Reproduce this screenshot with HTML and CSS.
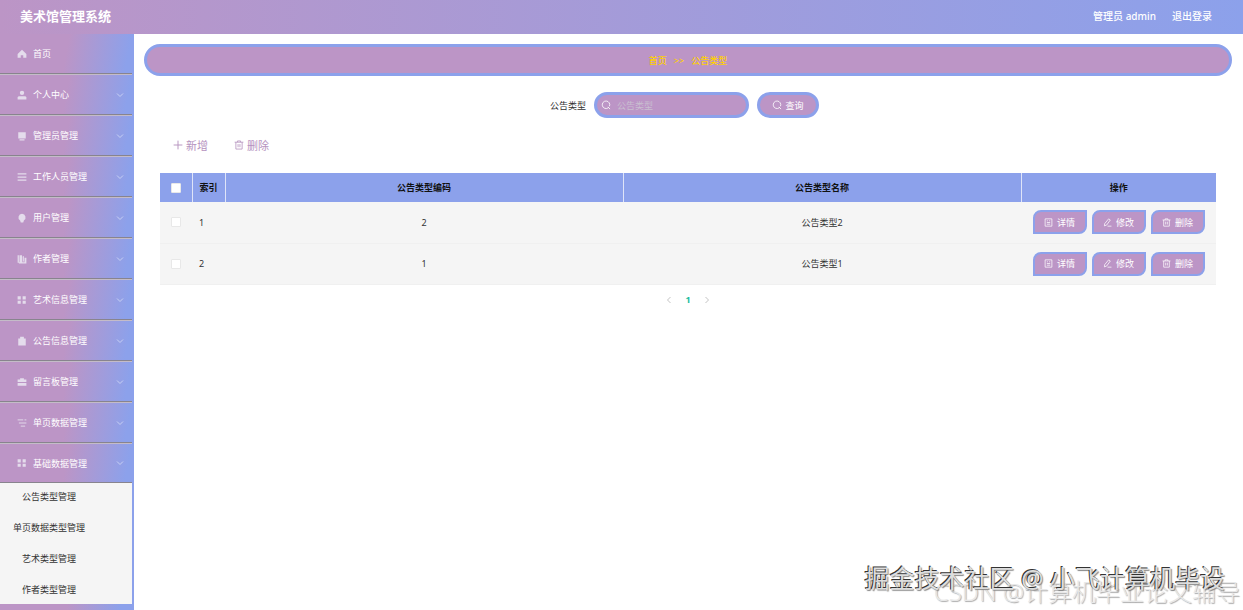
FILE: index.html
```
<!DOCTYPE html>
<html lang="zh-CN">
<head>
    <meta charset="UTF-8">
    <meta name="viewport" content="width=device-width, initial-scale=1.0">
    <title>美术馆管理系统</title>
    <link rel="stylesheet" href="styles.css">
</head>
<body>

<!-- shared icons -->
<svg class="sprite" aria-hidden="true">
    <symbol id="down" viewBox="0 0 16 16"><path d="M2 5l6 6 6-6" fill="none" stroke="currentColor" stroke-width="2"/></symbol>
    <symbol id="left" viewBox="0 0 16 16"><path d="M11 2L5 8l6 6" fill="none" stroke="currentColor" stroke-width="1.8"/></symbol>
    <symbol id="right" viewBox="0 0 16 16"><path d="M5 2l6 6-6 6" fill="none" stroke="currentColor" stroke-width="1.8"/></symbol>
    <symbol id="search" viewBox="0 0 16 16"><path d="M11.500 12.500a6 6 0 1 1 2-2.500M11 11l3.500 3.500" fill="none" stroke="currentColor" stroke-width="1.300"/></symbol>
    <symbol id="plus" viewBox="0 0 16 16"><path d="M8 1v14M1 8h14" fill="none" stroke="currentColor" stroke-width="1.500"/></symbol>
    <symbol id="trash" viewBox="0 0 16 16"><path d="M1 3.500h14M5.500 3.500v-2h5v2M3 3.500v11h10v-11M6.500 6.500v5M9.500 6.500v5" fill="none" stroke="currentColor" stroke-width="1.300"/></symbol>
    <symbol id="doc" viewBox="0 0 16 16"><path d="M2 1.500h12v13H2zM5 5h2M5 8h6M5 11h6M9 5h2" fill="none" stroke="currentColor" stroke-width="1.300"/></symbol>
    <symbol id="edit" viewBox="0 0 16 16"><path d="M10 1.500l3 2-6.500 9-4 1.500.5-4zM8 14.500h7" fill="none" stroke="currentColor" stroke-width="1.300"/></symbol>
    <symbol id="home" viewBox="0 0 16 16"><path d="M8 1L1 8v6h5v-4h4v4h5V8z" fill="currentColor"/></symbol>
    <symbol id="user" viewBox="0 0 16 16"><circle cx="8" cy="4.500" r="3.500" fill="currentColor"/><path d="M1 15v-3q0-2 3-2h8q3 0 3 2v3z" fill="currentColor"/></symbol>
    <symbol id="screen" viewBox="0 0 16 16"><path d="M2 2h12v10H2zM4 13h8v2H4z" fill="currentColor"/></symbol>
    <symbol id="list" viewBox="0 0 16 16"><path d="M1 3h14M1 8h14M1 13h14" stroke="currentColor" stroke-width="2"/></symbol>
    <symbol id="bulb" viewBox="0 0 16 16"><path d="M8 1a6 6 0 0 0-3 11l1 3h4l1-3A6 6 0 0 0 8 1z" fill="currentColor"/></symbol>
    <symbol id="chart" viewBox="0 0 16 16"><path d="M1 2h2v12H1zM4 2h4v12H4zM9 4l2-1v8l-2 3zM12 6h3v8h-3zM3 13h12v2H3z" fill="currentColor"/></symbol>
    <symbol id="grid" viewBox="0 0 16 16"><path d="M1 2h5v5H1zM9 2h5v5H9zM1 9h5v5H1zM9 9h5v5H9z" fill="currentColor"/></symbol>
    <symbol id="clip" viewBox="0 0 16 16"><path d="M2 4h3V1h6v3h3v11H2z" fill="currentColor"/></symbol>
    <symbol id="case" viewBox="0 0 16 16"><path d="M5 4V2h6v2h4v4H1V4zM1 9.500h14V14H1z" fill="currentColor"/></symbol>
    <symbol id="tree" viewBox="0 0 16 16"><path d="M1 3h9M3 8h12M6 13h7M12 3h3" stroke="currentColor" stroke-width="1.500"/></symbol>
</svg>

<header class="header">
    <h1>美术馆管理系统</h1>
    <div class="header-right">
        <span>管理员 admin</span>
        <a href="#">退出登录</a>
    </div>
</header>

<div class="container">
    <nav class="sidebar">
        <ul class="menu">
            <li><a href="#"><svg class="icon"><use href="#home"/></svg><span>首页</span></a></li>
            <li><a href="#"><svg class="icon"><use href="#user"/></svg><span>个人中心</span><svg class="arrow"><use href="#down"/></svg></a></li>
            <li><a href="#"><svg class="icon"><use href="#screen"/></svg><span>管理员管理</span><svg class="arrow"><use href="#down"/></svg></a></li>
            <li><a href="#"><svg class="icon"><use href="#list"/></svg><span>工作人员管理</span><svg class="arrow"><use href="#down"/></svg></a></li>
            <li><a href="#"><svg class="icon"><use href="#bulb"/></svg><span>用户管理</span><svg class="arrow"><use href="#down"/></svg></a></li>
            <li><a href="#"><svg class="icon"><use href="#chart"/></svg><span>作者管理</span><svg class="arrow"><use href="#down"/></svg></a></li>
            <li><a href="#"><svg class="icon"><use href="#grid"/></svg><span>艺术信息管理</span><svg class="arrow"><use href="#down"/></svg></a></li>
            <li><a href="#"><svg class="icon"><use href="#clip"/></svg><span>公告信息管理</span><svg class="arrow"><use href="#down"/></svg></a></li>
            <li><a href="#"><svg class="icon"><use href="#case"/></svg><span>留言板管理</span><svg class="arrow"><use href="#down"/></svg></a></li>
            <li><a href="#"><svg class="icon"><use href="#tree"/></svg><span>单页数据管理</span><svg class="arrow"><use href="#down"/></svg></a></li>
            <li><a href="#"><svg class="icon"><use href="#grid"/></svg><span>基础数据管理</span><svg class="arrow"><use href="#down"/></svg></a></li>
        </ul>
        <ul class="submenu">
            <li><a href="#">公告类型管理</a></li>
            <li><a href="#">单页数据类型管理</a></li>
            <li><a href="#">艺术类型管理</a></li>
            <li><a href="#">作者类型管理</a></li>
        </ul>
    </nav>

    <main class="main">
        <div class="breadcrumb">
            <a href="#">首页</a>
            <span>&gt;&gt;</span>
            <span>公告类型</span>
        </div>

        <form class="search">
            <label for="typeName">公告类型</label>
            <div class="search-box">
                <svg class="icon"><use href="#search"/></svg>
                <input type="text" id="typeName" placeholder="公告类型">
            </div>
            <button type="button" class="btn-search"><svg class="icon"><use href="#search"/></svg>查询</button>
        </form>

        <div class="toolbar">
            <button type="button"><svg class="icon"><use href="#plus"/></svg>新增</button>
            <button type="button"><svg class="icon"><use href="#trash"/></svg>删除</button>
        </div>

        <table class="table">
            <thead>
                <tr>
                    <th class="col-check"><input type="checkbox" aria-label="全选"></th>
                    <th class="col-index">索引</th>
                    <th>公告类型编码</th>
                    <th>公告类型名称</th>
                    <th class="col-action">操作</th>
                </tr>
            </thead>
            <tbody>
                <tr>
                    <td><input type="checkbox" aria-label="选择 1"></td>
                    <td class="index">1</td>
                    <td>2</td>
                    <td>公告类型2</td>
                    <td>
                        <div class="actions">
                            <button type="button"><svg class="icon"><use href="#doc"/></svg>详情</button>
                            <button type="button"><svg class="icon"><use href="#edit"/></svg>修改</button>
                            <button type="button"><svg class="icon"><use href="#trash"/></svg>删除</button>
                        </div>
                    </td>
                </tr>
                <tr>
                    <td><input type="checkbox" aria-label="选择 2"></td>
                    <td class="index">2</td>
                    <td>1</td>
                    <td>公告类型1</td>
                    <td>
                        <div class="actions">
                            <button type="button"><svg class="icon"><use href="#doc"/></svg>详情</button>
                            <button type="button"><svg class="icon"><use href="#edit"/></svg>修改</button>
                            <button type="button"><svg class="icon"><use href="#trash"/></svg>删除</button>
                        </div>
                    </td>
                </tr>
            </tbody>
        </table>

        <div class="pagination">
            <button type="button" aria-label="上一页"><svg class="arrow"><use href="#left"/></svg></button>
            <button type="button" class="active">1</button>
            <button type="button" aria-label="下一页"><svg class="arrow"><use href="#right"/></svg></button>
        </div>
    </main>
</div>

<div class="watermark watermark-csdn">CSDN @计算机毕业论文辅导</div>
<div class="watermark watermark-juejin">掘金技术社区 @ 小飞计算机毕设</div>

</body>
</html>
```

FILE: styles.css
```
* {
    box-sizing: border-box;
}
body {
    margin: 0;
    min-height: 100vh;
    display: flex;
    flex-direction: column;
    font-family: "Noto Sans", "Noto Sans CJK SC", sans-serif;
    font-size: 9px;
    color: #333;
    background-color: #fff;
}
ul {
    list-style: none;
    margin: 0;
    padding: 0;
}
a {
    color: inherit;
    text-decoration: none;
}
button, input {
    font: inherit;
}
button {
    cursor: pointer;
}
.sprite {
    position: absolute;
    width: 0;
    height: 0;
}
.icon {
    width: 10px;
    height: 10px;
    flex: none;
}
.arrow {
    width: 8px;
    height: 8px;
    flex: none;
}

/* header */
.header {
    display: flex;
    justify-content: space-between;
    align-items: center;
    height: 34px;
    padding: 0 31px 4px 20px;
    color: #fff;
    background: linear-gradient(90deg, #bc95c6, #8ca1eb);
}
.header h1 {
    margin: 0;
    font-size: 13px;
}
.header-right {
    display: flex;
    gap: 16px;
    font-size: 10px;
    font-weight: 500;
}

/* sidebar */
.container {
    display: flex;
    flex: 1;
}
.sidebar {
    width: 134px;
    flex: none;
    padding-right: 2px;
    background: linear-gradient(90deg, #bc95c6 50%, #8ca1eb 90%);
}
.menu a {
    display: flex;
    align-items: center;
    height: 41px;
    padding: 0 8px 0 17px;
    gap: 6px;
    color: #fff;
    border-top: 1px solid #c4bcc8;
    border-bottom: 1px solid #88848e;
    background: linear-gradient(100deg, #bc95c6 50%, #8ca1eb 95%);
}
.menu li:first-child a {
    height: 40px;
    border-top: none;
}
.menu li:last-child a {
    height: 40px;
}
.menu .icon {
    color: #e4dcec;
}
.menu .arrow {
    margin-left: auto;
    color: #c8d0f4;
}
.submenu {
    display: flex;
    flex-direction: column;
    gap: 3px;
    padding-right: 34px;
    text-align: center;
    line-height: 28px;
    background-color: #f5f5f5;
}
.submenu a {
    display: block;
}

/* content */
.main {
    flex: 1;
    padding: 10px 11px 10px 10px;
}
.breadcrumb {
    display: flex;
    justify-content: center;
    align-items: center;
    gap: 7px;
    height: 32px;
    font-weight: 500;
    color: #ffd000;
    border: 3px solid #8ca1eb;
    border-radius: 16px;
    background-color: #bc95c6;
}
.search {
    display: flex;
    justify-content: center;
    align-items: center;
    gap: 8px;
    padding: 16px 7px 0 0;
}
.search-box {
    display: flex;
    align-items: center;
    gap: 6px;
    width: 155px;
    height: 26px;
    padding: 0 4px;
    color: #fff;
    border: 3px solid #8ca1eb;
    border-radius: 13px;
    background-color: #bc95c6;
}
.search-box input {
    flex: 1;
    min-width: 0;
    padding: 0;
    border: none;
    outline: none;
    color: #fff;
    background: none;
}
.search-box input::placeholder {
    color: #c9bfd0;
}
.btn-search {
    display: flex;
    justify-content: center;
    align-items: center;
    gap: 3px;
    width: 62px;
    height: 26px;
    padding: 0;
    color: #fff;
    border: 3px solid #8ca1eb;
    border-radius: 13px;
    background-color: #bc95c6;
}
.toolbar {
    display: flex;
    gap: 26px;
    padding: 17px 29px 19px;
}
.toolbar button {
    display: flex;
    align-items: center;
    gap: 3px;
    height: 19px;
    padding: 0;
    border: none;
    font-size: 11px;
    color: #b592be;
    background: none;
}

/* table */
.table {
    width: calc(100% - 32px);
    margin: 0 16px;
    table-layout: fixed;
    border-collapse: collapse;
    text-align: center;
    background-color: #f5f5f5;
}
.table th, .table td {
    padding: 0;
}
.table th {
    height: 29px;
    color: #111;
    border-right: 1px solid #dfe4f8;
    background-color: #8ca1eb;
}
.table th:last-child {
    border-right: none;
}
.table td {
    height: 41px;
    border-bottom: 1px solid #f0f0f0;
}
.table .index {
    padding-left: 7px;
    text-align: left;
}
.col-check {
    width: 32px;
}
.col-index {
    width: 33px;
}
.col-action {
    width: 195px;
}
.table input {
    appearance: none;
    display: block;
    width: 10px;
    height: 10px;
    margin: 0 auto;
    border: 1px solid #e8e8e8;
    border-radius: 1px;
    background-color: #fff;
}
.actions {
    display: flex;
    justify-content: center;
    gap: 5px;
}
.actions button {
    display: flex;
    justify-content: center;
    align-items: center;
    gap: 4px;
    width: 54px;
    height: 24px;
    padding: 0;
    color: #fff;
    border: 2px solid #8ca1eb;
    border-radius: 8px 0;
    background-color: #bc95c6;
}
.actions .icon {
    width: 9px;
    height: 9px;
}

/* pagination */
.pagination {
    display: flex;
    justify-content: center;
    align-items: center;
    gap: 3px;
    padding-top: 7px;
}
.pagination button {
    display: flex;
    justify-content: center;
    align-items: center;
    width: 16px;
    height: 16px;
    padding: 0;
    border: none;
    color: #bbb;
    background: none;
}
.pagination .active {
    font-weight: bold;
    color: #18bc9c;
}

/* watermarks over the page corner */
.watermark {
    position: absolute;
    white-space: nowrap;
    pointer-events: none;
}
.watermark-juejin {
    right: 18px;
    bottom: 14px;
    font-size: 25px;
    line-height: 36px;
    color: #ddd;
    text-shadow: -1px -1px 0 #333, 1px 1px 1px #888;
}
.watermark-csdn {
    right: 3px;
    bottom: 2px;
    font-size: 24px;
    font-weight: 300;
    line-height: 32px;
    color: #e8e8e8;
    text-shadow: 1px 1px 1px #aaa;
}
```
